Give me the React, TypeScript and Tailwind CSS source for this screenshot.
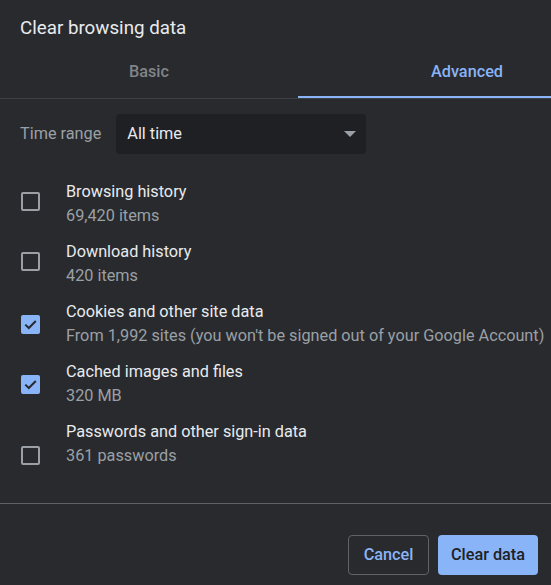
import { useState } from 'react';

type Item = { id: string; title: string; detail: string; checked: boolean };

const initialItems: Item[] = [
  { id: 'history', title: 'Browsing history', detail: '69,420 items', checked: false },
  { id: 'downloads', title: 'Download history', detail: '420 items', checked: false },
  {
    id: 'cookies',
    title: 'Cookies and other site data',
    detail: "From 1,992 sites (you won't be signed out of your Google Account)",
    checked: true,
  },
  { id: 'cache', title: 'Cached images and files', detail: '320 MB', checked: true },
  { id: 'passwords', title: 'Passwords and other sign-in data', detail: '361 passwords', checked: false },
];

function Checkbox({ checked, onClick }: { checked: boolean; onClick: () => void }) {
  if (checked) {
    return (
      <button
        onClick={onClick}
        aria-checked="true"
        role="checkbox"
        className="w-[19px] h-[19px] rounded-[2px] bg-[#8ab4f8] flex items-center justify-center shrink-0"
      >
        <svg width="19" height="19" viewBox="0 0 19 19" fill="none">
          <path d="M4.3 9.6 L7.8 13 L14.8 6" stroke="#292a2d" strokeWidth="2" />
        </svg>
      </button>
    );
  }
  return (
    <button
      onClick={onClick}
      aria-checked="false"
      role="checkbox"
      className="w-[19px] h-[19px] rounded-[2px] border-2 border-[#9aa0a6] shrink-0"
    />
  );
}

export default function App() {
  const [tab, setTab] = useState<'basic' | 'advanced'>('advanced');
  const [items, setItems] = useState(initialItems);

  const toggle = (id: string) =>
    setItems((prev) => prev.map((it) => (it.id === id ? { ...it, checked: !it.checked } : it)));

  return (
    <div className="w-[551px] h-[585px] bg-[#292a2d] overflow-hidden font-['Roboto',sans-serif] text-[16.25px]">
      {/* Header */}
      <h1 className="pt-4 pl-5 text-[18.75px] leading-6 font-normal text-[#e8eaed]">Clear browsing data</h1>

      {/* Tabs */}
      <div className="flex border-b border-[#3c4043]">
        <button
          onClick={() => setTab('basic')}
          className={`w-[298px] h-[58px] pt-[22px] flex items-start justify-center leading-5 font-medium border-b-2 ${
            tab === 'basic' ? 'border-[#8ab4f8] text-[#8ab4f8]' : 'border-transparent text-[#81858a]'
          }`}
        >
          Basic
        </button>
        <button
          onClick={() => setTab('advanced')}
          className={`flex-1 h-[58px] pt-[22px] pl-[133px] flex items-start justify-start leading-5 font-medium border-b-2 ${
            tab === 'advanced' ? 'border-[#8ab4f8] text-[#8ab4f8]' : 'border-transparent text-[#81858a]'
          }`}
        >
          Advanced
        </button>
      </div>

      {/* Time range */}
      <div className="mt-[15px] pl-5 flex items-center gap-[15px]">
        <span className="text-[#9aa0a6]">Time range</span>
        <div className="w-[250px] h-10 rounded-[4px] bg-[#1f2023] pl-[11px] pr-[10px] flex items-center justify-between">
          <span className="text-[#e8eaed]">All time</span>
          <svg width="12" height="6" viewBox="0 0 12 6">
            <path d="M0 0 H12 L6 6 Z" fill="#9aa0a6" />
          </svg>
        </div>
      </div>

      {/* Checkbox list */}
      <div className="mt-[26px] flex flex-col gap-3 pl-[21px]">
        {items.map((it, i) => (
          <div key={it.id} className="flex h-12 gap-[26px] items-center">
            <div className={i === items.length - 1 ? 'self-start mt-[26px]' : ''}>
              <Checkbox checked={it.checked} onClick={() => toggle(it.id)} />
            </div>
            <div className="leading-6 whitespace-nowrap">
              <div className="text-[#e8eaed]">{it.title}</div>
              <div className="text-[#9aa0a6]">{it.detail}</div>
            </div>
          </div>
        ))}
      </div>

      {/* Footer */}
      <div className="mt-[35px] border-t border-[#5f6368]" />
      <div className="mt-[31px] pr-[13px] flex justify-end gap-[9px]">
        <button className="w-[81px] h-10 rounded-[4px] border border-[#5f6368] text-[#8ab4f8] font-medium">
          Cancel
        </button>
        <button className="w-[100px] h-10 rounded-[4px] bg-[#8ab4f8] text-[#202124] font-medium">
          Clear data
        </button>
      </div>
    </div>
  );
}
